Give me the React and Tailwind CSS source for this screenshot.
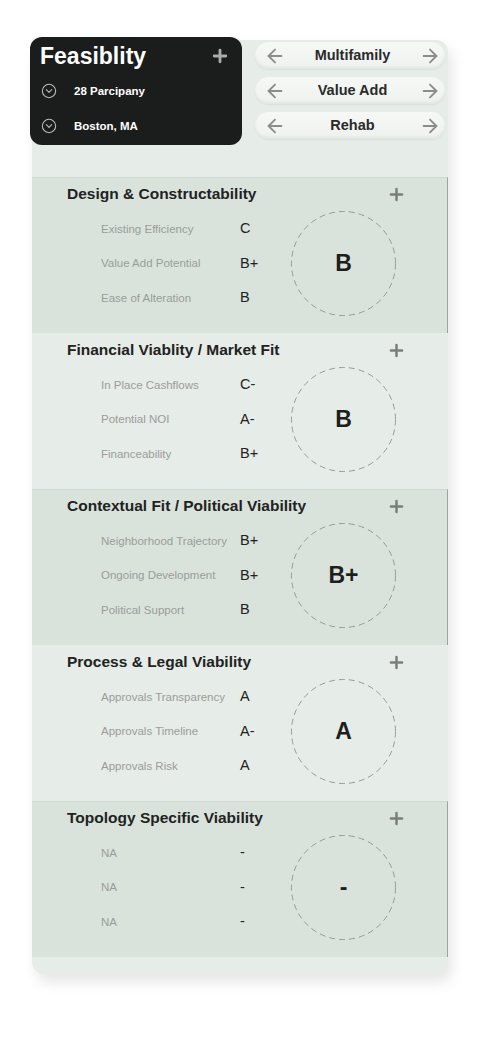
import React from "react";
import { ArrowLeft, ArrowRight, CircleChevronDown, Plus } from "lucide-react";

const sections = [
  {
    title: "Design & Constructability",
    score: "B",
    rows: [
      ["Existing Efficiency", "C"],
      ["Value Add Potential", "B+"],
      ["Ease of Alteration", "B"],
    ],
  },
  {
    title: "Financial Viablity / Market Fit",
    score: "B",
    rows: [
      ["In Place Cashflows", "C-"],
      ["Potential NOI", "A-"],
      ["Financeability", "B+"],
    ],
  },
  {
    title: "Contextual Fit / Political Viability",
    score: "B+",
    rows: [
      ["Neighborhood Trajectory", "B+"],
      ["Ongoing Development", "B+"],
      ["Political Support", "B"],
    ],
  },
  {
    title: "Process & Legal Viability",
    score: "A",
    rows: [
      ["Approvals Transparency", "A"],
      ["Approvals Timeline", "A-"],
      ["Approvals Risk", "A"],
    ],
  },
  {
    title: "Topology Specific Viability",
    score: "-",
    rows: [
      ["NA", "-"],
      ["NA", "-"],
      ["NA", "-"],
    ],
  },
];

const pills = ["Multifamily", "Value Add", "Rehab"];

const Pill = ({ label }) => (
  <div className="flex h-[27px] items-center justify-between rounded-full bg-gradient-to-b from-[#f6f8f6] to-[#eef2ef] pl-[9px] pr-[4px] shadow-[inset_0_-2px_3px_rgba(0,0,0,0.05),0_1px_2px_rgba(0,0,0,0.06)]">
    <ArrowLeft size={22} strokeWidth={2} className="text-[#8a8d8b]" />
    <span className="text-[14.5px] font-bold text-[#2a2a2a]">{label}</span>
    <ArrowRight size={22} strokeWidth={2} className="text-[#8a8d8b]" />
  </div>
);

const ScoreCircle = ({ score }) => (
  <div className="relative flex h-[105px] w-[105px] items-center justify-center">
    <svg className="absolute inset-0" width="105" height="105" viewBox="0 0 105 105">
      <circle cx="52.5" cy="52.5" r="52" fill="none" stroke="#8e928f" strokeWidth="0.9" strokeDasharray="6 4" />
    </svg>
    <span className="relative text-[23px] font-bold text-[#1e1e1e]">{score}</span>
  </div>
);

const Section = ({ s, dark }) => (
  <div
    className={
      dark
        ? "h-[156px] border-r border-t border-r-[#9ba59e] border-t-[#cfd8d1] bg-[#d9e3dc] pl-[35px] pr-[41px] pt-[7px]"
        : "h-[156px] bg-[#e6ece7] pl-[35px] pr-[42px] pt-[8px]"
    }
  >
    <div className="flex h-[18px] items-center justify-between">
      <span className="text-[15.5px] font-bold text-[#222]">{s.title}</span>
      <Plus size={19} strokeWidth={3.2} className="text-[#7b7f7c]" />
    </div>
    <div className="mt-[8px] flex">
      <div className="flex flex-col pl-[34px] pt-[1px]">
        {s.rows.map(([label, grade], i) => (
          <div key={i} className="flex h-[34.5px] items-center">
            <span className="w-[139px] text-[11.5px] text-[#9a9d9b]">{label}</span>
            <span className="w-[51px] text-[14.5px] text-[#222]">{grade}</span>
          </div>
        ))}
      </div>
      <ScoreCircle score={s.score} />
    </div>
  </div>
);

export default function App() {
  return (
    <div className="min-h-screen bg-white pt-[40px] font-[family-name:Liberation_Sans,Arial,sans-serif]">
      <div className="ml-[32px] w-[416px] rounded-[12px] bg-[#e6ece7] pb-[17px] shadow-[4px_8px_14px_rgba(0,0,0,0.10)]">
        <div className="flex h-[137px] gap-[13px]">
          <div className="-ml-[2px] -mt-[3px] h-[108px] w-[212px] rounded-[12px] bg-[#1b1d1d] px-[10px] pt-[2px]">
            <div className="flex items-center justify-between pr-[2px]">
              <span className="text-[23px] font-bold text-white">Feasiblity</span>
              <Plus size={20} strokeWidth={3.4} className="text-[#a9abaa]" />
            </div>
            <div className="mt-[9px] flex items-center gap-[17px] pl-[1px]">
              <CircleChevronDown size={16} strokeWidth={1.6} className="text-[#b9bcbb]" />
              <span className="text-[11.5px] font-bold text-white">28 Parcipany</span>
            </div>
            <div className="mt-[18px] flex items-center gap-[17px] pl-[1px]">
              <CircleChevronDown size={16} strokeWidth={1.6} className="text-[#b9bcbb]" />
              <span className="text-[11.5px] font-bold text-white">Boston, MA</span>
            </div>
          </div>
          <div className="mt-[2px] flex w-[190px] flex-col gap-[8px]">
            {pills.map((p) => (
              <Pill key={p} label={p} />
            ))}
          </div>
        </div>
        {sections.map((s, i) => (
          <Section key={i} s={s} dark={i % 2 === 0} />
        ))}
      </div>
    </div>
  );
}
